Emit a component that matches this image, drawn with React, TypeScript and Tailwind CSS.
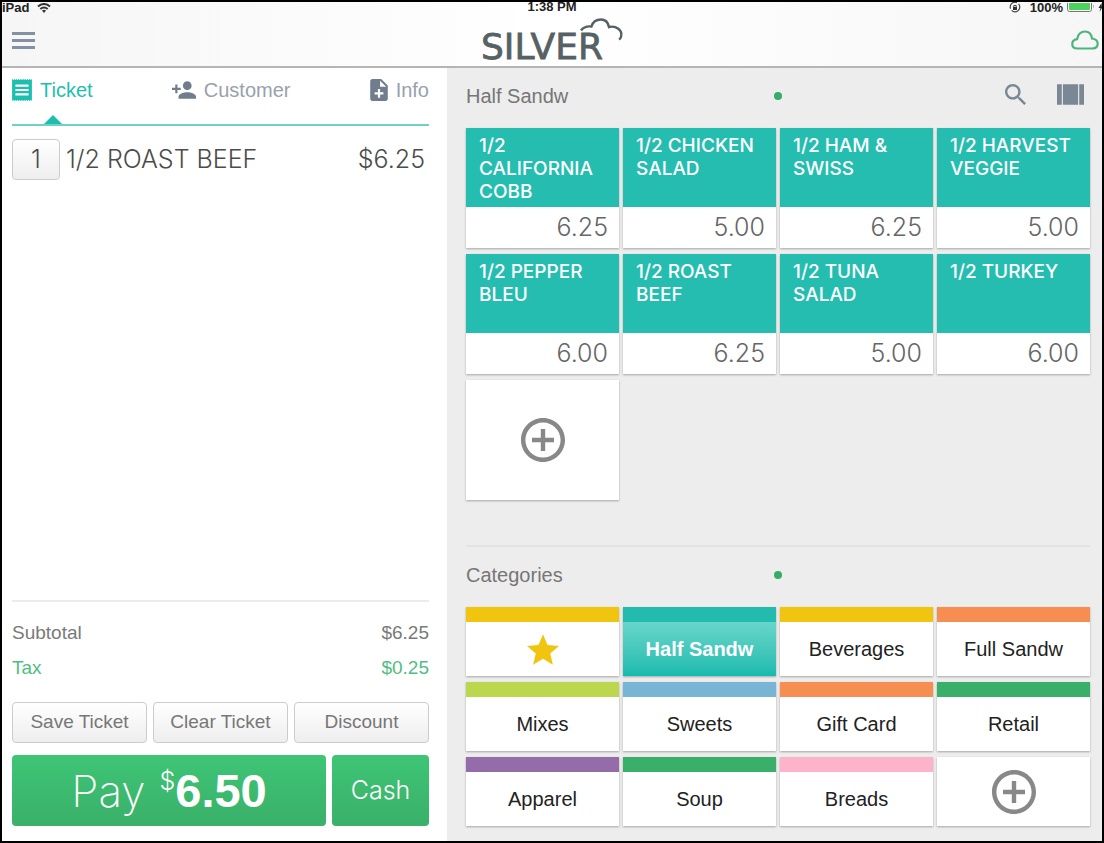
import type { ReactNode } from 'react';

type Product = { name: string; price: string };
type Category = { name: string; bar: string; active?: boolean; starred?: boolean };

const PRODUCTS: Product[] = [
   { name: '1/2 CALIFORNIA COBB', price: '6.25' },
   { name: '1/2 CHICKEN SALAD', price: '5.00' },
   { name: '1/2 HAM & SWISS', price: '6.25' },
   { name: '1/2 HARVEST VEGGIE', price: '5.00' },
   { name: '1/2 PEPPER BLEU', price: '6.00' },
   { name: '1/2 ROAST BEEF', price: '6.25' },
   { name: '1/2 TUNA SALAD', price: '5.00' },
   { name: '1/2 TURKEY', price: '6.00' },
];

const CATEGORIES: Category[] = [
   { name: 'Favorites', bar: 'bg-[#f0c40f]', starred: true },
   { name: 'Half Sandw', bar: 'bg-[#22bbad]', active: true },
   { name: 'Beverages', bar: 'bg-[#f0c40f]' },
   { name: 'Full Sandw', bar: 'bg-[#f68d51]' },
   { name: 'Mixes', bar: 'bg-[#bad74e]' },
   { name: 'Sweets', bar: 'bg-[#78b4d3]' },
   { name: 'Gift Card', bar: 'bg-[#f68d51]' },
   { name: 'Retail', bar: 'bg-[#3aaf69]' },
   { name: 'Apparel', bar: 'bg-[#946ca9]' },
   { name: 'Soup', bar: 'bg-[#3aaf69]' },
   { name: 'Breads', bar: 'bg-[#fdb3c9]' },
];

// Material shapes, with the view box cropped to the ink
const PATHS = {
   receipt: 'M18 17H6v-2h12v2zm0-4H6v-2h12v2zm0-4H6V7h12v2zM3 22l1-.8 1 .8 1-.8 1 .8 1-.8 1 .8 1-.8 1 .8 1-.8 1 .8 1-.8 1 .8 1-.8 1 .8 1-.8 1 .8 1-.8 1 .8V2l-1 .8-1-.8-1 .8-1-.8-1 .8-1-.8-1 .8-1-.8-1 .8-1-.8-1 .8-1-.8-1 .8-1-.8-1 .8-1-.8-1 .8-1-.8v20z',
   personAdd: 'M15 12c2.210 0 4-1.790 4-4s-1.790-4-4-4-4 1.790-4 4 1.790 4 4 4zm-9-2V7H4v3H1v2h3v3h2v-3h3v-2H6zm9 4c-2.670 0-8 1.340-8 4v2h16v-2c0-2.660-5.330-4-8-4z',
   noteAdd: 'M14 2H6c-1.100 0-1.990.9-1.990 2L4 20c0 1.100.89 2 1.990 2H18c1.100 0 2-.9 2-2V8l-6-6zm2 14h-3v3h-2v-3H8v-2h3v-3h2v3h3v2zm-3-7V3.500L18.500 9H13z',
   search: 'M15.500 14h-.79l-.28-.27C15.410 12.590 16 11.110 16 9.500 16 5.910 13.090 3 9.500 3S3 5.910 3 9.500 5.910 16 9.500 16c1.610 0 3.090-.59 4.230-1.570l.27.28v.79l5 4.990L20.490 19l-4.990-5zm-6 0C7.010 14 5 11.990 5 9.500S7.010 5 9.500 5 14 7.010 14 9.500 11.990 14 9.500 14z',
   viewArray: 'M4 18h3V5H4v13zM18 5v13h3V5h-3zM7.700 18h9.600V5H7.700v13z',
   star: 'M12 17.270L18.180 21l-1.640-7.030L22 9.240l-7.190-.61L12 2 9.190 8.630 2 9.240l5.460 4.730L5.820 21z',
   addCircle: 'M13 7h-2v4H7v2h4v4h2v-4h4v-2h-4V7zm-1-5C6.480 2 2 6.480 2 12s4.480 10 10 10 10-4.480 10-10S17.520 2 12 2zm0 18c-4.410 0-8-3.590-8-8s3.590-8 8-8 8 3.590 8 8-3.590 8-8 8z',
};

const Icon = ({ type, box, className }: { type: keyof typeof PATHS; box: string; className: string }) => (
   <svg viewBox={box} className={`shrink-0 ${className}`} fill="currentColor" aria-hidden="true">
      <path d={PATHS[type]} />
   </svg>
);

const StatusBar = () => (
   <div className="grid grid-cols-3 h-[10px] text-[13px] leading-[10px] font-bold text-[#222]">
      <div className="flex items-center gap-2">
         <span>iPad</span>
         <svg viewBox="0 0 14 10" className="w-[14px] h-[10px]" fill="none" stroke="#333" strokeWidth="2" aria-hidden="true">
            <path d="M1 3.500Q7-1.500 13 3.500M3.300 6Q7 3 10.700 6" />
            <path d="M5 7.500Q7 6.200 9 7.500L7 10z" fill="#333" stroke="none" />
         </svg>
      </div>
      <span className="text-center">1:38 PM</span>
      <div className="flex items-center justify-end gap-1">
         <svg viewBox="0 0 14 12" className="w-[14px] h-[12px] mr-1" fill="none" stroke="#444" aria-hidden="true">
            <circle cx="7" cy="5" r="4.800" strokeWidth="1.200" strokeDasharray="11 2" />
            <path d="M5 5h4v3H5z" fill="#333" stroke="none" />
            <path d="M5.800 5V3.500h2.400V5" />
         </svg>
         <span>100%</span>
         <svg viewBox="0 0 35 10" className="w-[35px] h-[10px]" aria-hidden="true">
            <rect x="0.500" y="-2" width="24" height="10.500" rx="2" fill="#fff" stroke="#777" />
            <rect x="2" y="-1" width="21" height="8" rx="1" fill="#4cd35f" />
            <path d="M26 1.500q1.500 1.500 0 4z" fill="#777" />
            <path d="M34.500 0L31.500 5h2l-1 4L35 5z" fill="#222" />
         </svg>
      </div>
   </div>
);

const Logo = () => (
   <svg viewBox="0 0 142 50" className="w-[142px] h-[50px] overflow-visible" role="img" aria-label="Silver">
      <text x="-1" y="44" fontFamily="DejaVu Sans, sans-serif" fontSize="36" fill="#566164" stroke="#566164" strokeWidth="0.800">SILVER</text>
      <path
         d="M99 15.500C101.500 12 105 11 109.500 11.500C111 6 115 4.500 119 4.500C123 4.500 126 7 127 12C134 10.500 141 15 139 22C138.700 23 138 24 137 24.500"
         fill="none"
         stroke="#566164"
         strokeWidth="2.400"
      />
   </svg>
);

const Header = () => (
   <header className="bg-linear-to-r from-[#f6f6f6] via-white to-[#f6f6f6] border-b-2 border-[#b5b5b5]">
      <StatusBar />
      <div className="flex items-center justify-between h-[54px] pt-[2px] pl-[10px] pr-[3px]">
         <button type="button" aria-label="Menu">
            <svg viewBox="0 0 23 17" className="w-[23px] h-[17px]" fill="#8491a0" aria-hidden="true">
               <path d="M0 0h23v3H0zM0 7h23v3H0zM0 14h23v3H0z" />
            </svg>
         </button>
         <Logo />
         <button type="button" aria-label="Cloud status">
            <svg viewBox="0 0 28 20" className="w-[28px] h-[20px]" fill="none" stroke="#4cb57a" strokeWidth="2.200" aria-hidden="true">
               <path d="M6.500 18.500C-.5 18.500-.3 10 6 9.200C7 4 10.500 1.500 14 1.500C18 1.500 20.500 4.500 21 8.500C28.500 9.500 28.500 18 21.500 18.500Z" />
            </svg>
         </button>
      </div>
   </header>
);

const TicketPanel = () => (
   <section className="flex flex-col w-[445px] shrink-0 bg-white pl-[10px] pr-[18px] pb-[15px]">
      <nav className="relative flex justify-between h-[58px] pb-3 border-b-2 border-[#6dd0c9] text-[20px] text-[#98a1ac]">
         <button type="button" className="flex items-center gap-2 text-[#1cbfae]">
            <Icon type="receipt" box="3 2 18 20" className="w-[20px] h-[22px]" />
            Ticket
         </button>
         <button type="button" className="flex items-center gap-2">
            <Icon type="personAdd" box="1 4 22 16" className="w-[24px] h-[18px] text-[#6f7d8c]" />
            Customer
         </button>
         <button type="button" className="flex items-center gap-2">
            <Icon type="noteAdd" box="4 2 16 20" className="w-[18px] h-[22px] text-[#6f7d8c]" />
            Info
         </button>
         <svg viewBox="0 0 18 9" className="absolute left-[32px] bottom-0 w-[18px] h-[9px]" fill="#1cbfae" aria-hidden="true">
            <path d="M0 9L9 0l9 9z" />
         </svg>
      </nav>

      <ul className="flex-1 pt-[13px]">
         <li className="flex items-center gap-[6px] font-[Inter] font-light text-[25px] text-[#4c4c4c]">
            <button
               type="button"
               aria-label="Quantity 1"
               className="w-[48px] h-[41px] rounded-sm border border-[#ccc] bg-linear-to-b from-white to-[#eee]"
            >
               1
            </button>
            <span className="flex-1">1/2 ROAST BEEF</span>
            <span className="pr-1">$6.25</span>
         </li>
      </ul>

      <dl className="border-t-2 border-[#ececec] pt-[13px] pb-[17px] text-[19px] leading-[35px] text-[#7a7a7a]">
         <div className="flex justify-between">
            <dt>Subtotal</dt>
            <dd>$6.25</dd>
         </div>
         <div className="flex justify-between text-[#52bd83]">
            <dt>Tax</dt>
            <dd>$0.25</dd>
         </div>
      </dl>

      <div className="grid grid-cols-3 gap-[6px]">
         {['Save Ticket', 'Clear Ticket', 'Discount'].map((label) => (
            <button
               key={label}
               type="button"
               className="h-[41px] rounded-sm border border-[#ccc] bg-linear-to-b from-white to-[#eee] text-[19px] text-[#777]"
            >
               {label}
            </button>
         ))}
      </div>

      <div className="flex gap-[6px] mt-3 text-white">
         <button
            type="button"
            className="flex-1 flex items-center justify-center gap-[14px] h-[71px] rounded-sm bg-linear-to-b from-[#3ec576] to-[#3ab069]"
         >
            <span className="font-[Inter] font-extralight text-[44px]">Pay</span>
            <span className="flex">
               <span className="font-[Inter] font-light text-[25px] leading-[40px]">$</span>
               <span className="text-[47px] leading-[60px] font-bold">6.50</span>
            </span>
         </button>
         <button
            type="button"
            className="w-[97px] rounded-sm bg-linear-to-b from-[#3ec576] to-[#3ab069] font-[Inter] font-light text-[25px]"
         >
            Cash
         </button>
      </div>
   </section>
);

const SectionHeader = ({ title, children }: { title: string; children?: ReactNode }) => (
   <div className="grid grid-cols-3 items-center h-[60px] pb-1">
      <h2 className="text-[20px] text-[#767676]">{title}</h2>
      <span className="justify-self-center size-2 rounded-full bg-[#34ad67]" />
      <div className="flex items-center justify-end gap-[31px] pr-[6px] pb-1 text-[#7a8794]">{children}</div>
   </div>
);

const CARD_SHADOW = 'shadow-[0_1px_2px_rgba(0,0,0,0.3)]';

const ProductCard = ({ name, price }: Product) => (
   <button type="button" className={`flex flex-col h-[120px] bg-white text-left ${CARD_SHADOW}`}>
      <span className="block w-full h-[80px] bg-[#25bdb0] px-[13px] pt-[6px] font-[Inter] font-medium text-[19px] leading-[23px] text-white">
         {name}
      </span>
      <span className="block w-full pr-[11px] text-right font-[Inter] font-light text-[25px] leading-[41px] text-[#666]">{price}</span>
   </button>
);

const CategoryCard = ({ name, bar, active, starred }: Category) => (
   <button
      type="button"
      aria-label={name}
      className={`flex flex-col h-[69px] text-[20px] ${CARD_SHADOW} ${
         active ? 'bg-linear-to-b from-[#67d6cb] from-20% to-[#12bbae] font-bold text-white' : 'bg-white text-[#222]'
      }`}
   >
      <span className={`block w-full h-[15px] ${bar}`} />
      <span className="flex flex-1 w-full items-center justify-center">
         {starred ? <Icon type="star" box="2 2 20 19" className="w-[32px] h-[31px] text-[#f0c40f]" /> : name}
      </span>
   </button>
);

const AddCard = ({ label, height }: { label: string; height: string }) => (
   <button type="button" aria-label={label} className={`flex items-center justify-center bg-white ${height} ${CARD_SHADOW}`}>
      <Icon type="addCircle" box="2 2 20 20" className="size-[44px] text-[#888]" />
   </button>
);

const CatalogPanel = () => (
   <section className="flex flex-col flex-1 min-w-0 bg-[#ededed] pl-[19px] pr-3 pb-[15px]">
      <div className="flex-1 pb-[44px]">
         <SectionHeader title="Half Sandw">
            <button type="button" aria-label="Search">
               <Icon type="search" box="3 3 17.490 17.490" className="size-[21px]" />
            </button>
            <button type="button" aria-label="Change view">
               <Icon type="viewArray" box="4 5 17 13" className="w-[27px] h-[21px]" />
            </button>
         </SectionHeader>
         <div className="grid grid-cols-4 gap-x-1 gap-y-[6px]">
            {PRODUCTS.map((product) => <ProductCard key={product.name} {...product} />)}
            <AddCard label="Add item" height="h-[120px]" />
         </div>
      </div>
      <div className="border-t-2 border-[#e4e4e4]">
         <SectionHeader title="Categories" />
         <div className="grid grid-cols-4 gap-x-1 gap-y-[6px]">
            {CATEGORIES.map((category) => <CategoryCard key={category.name} {...category} />)}
            <AddCard label="Add category" height="h-[69px]" />
         </div>
      </div>
   </section>
);

const App = () => (
   <div className="flex flex-col min-h-screen border-2 border-black bg-white font-['Liberation_Sans',Arial,sans-serif]">
      <Header />
      <main className="flex flex-1">
         <TicketPanel />
         <CatalogPanel />
      </main>
   </div>
);

export default App;
